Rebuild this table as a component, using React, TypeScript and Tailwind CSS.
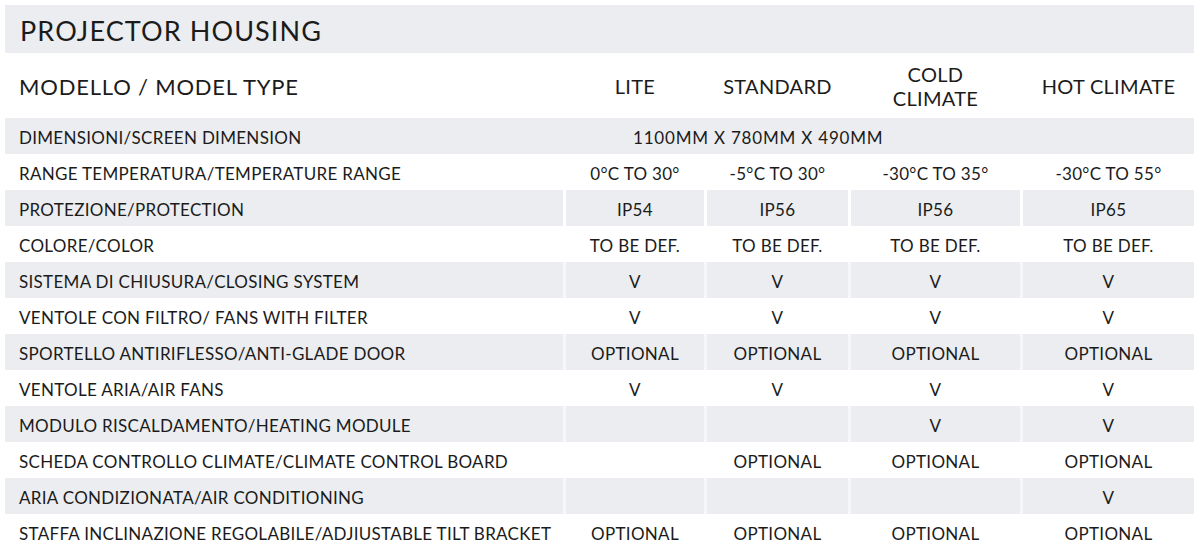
import React from 'react';

type Row = { label: string; values: string[]; gray: boolean; strong?: boolean };

const rows: Row[] = [
  { label: 'RANGE TEMPERATURA/TEMPERATURE RANGE', values: ['0°C TO 30°', '-5°C TO 30°', '-30°C TO 35°', '-30°C TO 55°'], gray: false },
  { label: 'PROTEZIONE/PROTECTION', values: ['IP54', 'IP56', 'IP56', 'IP65'], gray: true, strong: true },
  { label: 'COLORE/COLOR', values: ['TO BE DEF.', 'TO BE DEF.', 'TO BE DEF.', 'TO BE DEF.'], gray: false },
  { label: 'SISTEMA DI CHIUSURA/CLOSING SYSTEM', values: ['V', 'V', 'V', 'V'], gray: true },
  { label: 'VENTOLE CON FILTRO/ FANS WITH FILTER', values: ['V', 'V', 'V', 'V'], gray: false },
  { label: 'SPORTELLO ANTIRIFLESSO/ANTI-GLADE DOOR', values: ['OPTIONAL', 'OPTIONAL', 'OPTIONAL', 'OPTIONAL'], gray: true },
  { label: 'VENTOLE ARIA/AIR FANS', values: ['V', 'V', 'V', 'V'], gray: false },
  { label: 'MODULO RISCALDAMENTO/HEATING MODULE', values: ['', '', 'V', 'V'], gray: true },
  { label: 'SCHEDA CONTROLLO CLIMATE/CLIMATE CONTROL BOARD', values: ['', 'OPTIONAL', 'OPTIONAL', 'OPTIONAL'], gray: false },
  { label: 'ARIA CONDIZIONATA/AIR CONDITIONING', values: ['', '', '', 'V'], gray: true },
  { label: 'STAFFA INCLINAZIONE REGOLABILE/ADJIUSTABLE TILT BRACKET', values: ['OPTIONAL', 'OPTIONAL', 'OPTIONAL', 'OPTIONAL'], gray: false },
];

// label + 4 model columns, 3px gutters between cells
const cols = 'grid grid-cols-[558px_138px_141px_169px_171px] gap-x-[3px]';

export default function App() {
  return (
    <div className="w-[1200px] h-[555px] bg-white text-[#1b1b1b] pt-[5px] pl-[5px] overflow-hidden" style={{ fontFamily: 'Lato, "Noto Sans", sans-serif' }}>
      <div className="w-[1189px]">
        {/* title */}
        <div className="h-[48px] bg-[#ebedf0] flex items-center pl-[15px] pt-[3px] text-[27px] leading-none tracking-[1.1px]">
          PROJECTOR HOUSING
        </div>

        {/* model header */}
        <div className={`${cols} h-[65px] items-center pt-[1px]`}>
          <div className="pl-[14px] text-[22px] tracking-[0.8px]">MODELLO / MODEL TYPE</div>
          <div className="text-center text-[20px] leading-[24px] tracking-[0.3px]">LITE</div>
          <div className="text-center text-[20px] leading-[24px] tracking-[0.3px]">STANDARD</div>
          <div className="text-center text-[20px] leading-[24px] tracking-[0.3px]">COLD<br />CLIMATE</div>
          <div className="text-center text-[20px] leading-[24px] tracking-[0.3px]">HOT CLIMATE</div>
        </div>

        {/* dimensions, merged cell */}
        <div className="h-[36px] bg-[#ebedf0] flex items-center pt-[4px] text-[17px] tracking-[0.3px]">
          <div className="w-[561px] pl-[14px]">DIMENSIONI/SCREEN DIMENSION</div>
          <div className="pl-[67px] tracking-[0.8px]">1100MM X 780MM X 490MM</div>
        </div>

        {rows.map((r) => (
          <div key={r.label} className={`${cols} h-[36px] text-[17px] tracking-[0.3px] ${r.gray && !r.strong ? 'bg-[#f6f7f8]' : 'bg-white'}`}>
            <div className={`flex items-center pl-[14px] pt-[4px] ${r.gray ? 'bg-[#ebedf0]' : ''}`}>{r.label}</div>
            {r.values.map((v, i) => (
              <div key={i} className={`flex items-center justify-center pt-[4px] ${r.gray ? 'bg-[#ebedf0]' : ''}`}>{v}</div>
            ))}
          </div>
        ))}
      </div>
    </div>
  );
}
